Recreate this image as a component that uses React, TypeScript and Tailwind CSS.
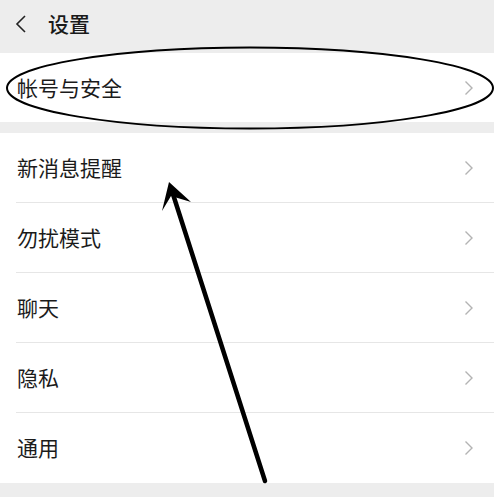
import React from 'react';

const font = { fontFamily: '"Noto Sans CJK SC", "Noto Sans", sans-serif' };

const items = ['新消息提醒', '勿扰模式', '聊天', '隐私', '通用'];

function Chevron() {
  return (
    <svg width="10" height="16" viewBox="0 0 10 16" className="shrink-0">
      <path d="M1.5 1.5 L8 8 L1.5 14.5" fill="none" stroke="#b3b3b3" strokeWidth="1.4" />
    </svg>
  );
}

function Row({ label, last }: { label: string; last?: boolean }) {
  return (
    <div className="pl-[16px]">
      <div
        className={`flex h-[70px] items-center justify-between pr-[20px] ${last ? '' : 'border-b border-[#e6e6e6]'}`}
      >
        <span className="pl-[1px] text-[21px] text-[#1b1b1b]">{label}</span>
        <Chevron />
      </div>
    </div>
  );
}

export default function App() {
  return (
    <div className="relative h-[497px] w-[494px] overflow-hidden bg-[#ededed]" style={font}>
      {/* header */}
      <div className="flex h-[53px] items-center pb-[6px] pl-[14px]">
        <svg width="14" height="20" viewBox="0 0 14 20">
          <path d="M11 2 L3 10 L11 18" fill="none" stroke="#222" strokeWidth="1.6" />
        </svg>
        <span className="ml-[20px] text-[21px] font-medium text-[#1a1a1a]">设置</span>
      </div>

      <div className="bg-white">
        <div className="flex h-[69px] items-center justify-between pl-[17px] pr-[20px]">
          <span className="text-[21px] text-[#1b1b1b]">帐号与安全</span>
          <Chevron />
        </div>
      </div>

      <div className="mt-[11px] bg-white">
        {items.map((label, i) => (
          <Row key={label} label={label} last={i === items.length - 1} />
        ))}
      </div>

      {/* hand-drawn annotation */}
      <svg className="pointer-events-none absolute left-0 top-0" width="494" height="497" viewBox="0 0 494 497">
        <ellipse cx="250" cy="88" rx="243" ry="40.5" fill="none" stroke="#000" strokeWidth="2" />
        <line x1="265" y1="481" x2="171" y2="188" stroke="#000" strokeWidth="4.5" strokeLinecap="round" />
        <path d="M169 182 L162 211 L171 196 L191 202 Z" fill="#000" />
      </svg>
    </div>
  );
}
